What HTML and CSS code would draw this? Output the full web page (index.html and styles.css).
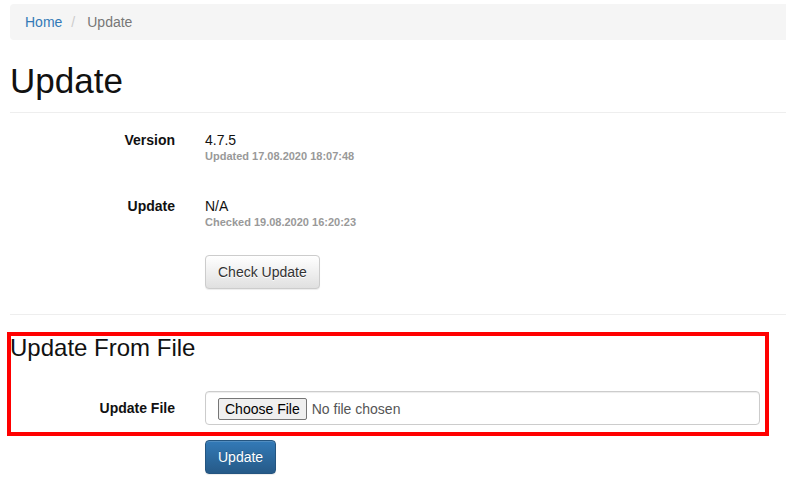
FILE: index.html
```html
<!DOCTYPE html>
<html lang="en">
<head>
<meta charset="utf-8">
<title>Update</title>
<link rel="stylesheet" href="styles.css">
</head>
<body>
<div class="page">
  <ol class="breadcrumb">
    <li><a href="#">Home</a></li>
    <li class="active">Update</li>
  </ol>

  <h1 class="page-title">Update</h1>

  <div class="form-row first">
    <div class="label">Version</div>
    <div class="value">
      <div class="value-main">4.7.5</div>
      <div class="value-note">Updated 17.08.2020 18:07:48</div>
    </div>
  </div>

  <div class="form-row">
    <div class="label">Update</div>
    <div class="value">
      <div class="value-main">N/A</div>
      <div class="value-note">Checked 19.08.2020 16:20:23</div>
    </div>
  </div>

  <div class="form-row actions">
    <div></div>
    <div><button class="btn btn-default" type="button">Check Update</button></div>
  </div>

  <div class="divider"></div>

  <h3 class="section-title">Update From File</h3>

  <div class="form-row file-row">
    <label class="label" for="file">Update File</label>
    <div class="value-input"><input id="file" class="form-control" type="file"></div>
  </div>

  <div class="form-row submit-row">
    <div></div>
    <div><button class="btn btn-primary" type="button">Update</button></div>
  </div>

  <div class="highlight"></div>
</div>
</body>
</html>
```

FILE: styles.css
```css
html, body {
  margin: 0;
  padding: 0;
  background: #fff;
}

body {
  font-family: "Liberation Sans", Arial, Helvetica, sans-serif;
  font-size: 14px;
  line-height: 20px;
  color: #333;
  overflow: hidden;
}

.page {
  position: relative;
  padding: 4px 0 0 10px;
  min-height: 482px;
}

.breadcrumb {
  list-style: none;
  margin: 0;
  padding: 8px 15px;
  background: #f5f5f5;
  border-radius: 4px 0 0 4px;
  display: flex;
  line-height: 20px;
}

.breadcrumb li + li::before {
  content: "/";
  padding: 0 12px 0 9px;
  color: #ccc;
}

.breadcrumb a {
  color: #337ab7;
  text-decoration: none;
}

.breadcrumb .active {
  color: #777;
}

.page-title {
  margin: 22px 0 0;
  font-size: 35px;
  line-height: 38px;
  font-weight: normal;
  color: #111;
  padding-bottom: 12px;
  border-bottom: 1px solid #eee;
}

.form-row {
  display: grid;
  grid-template-columns: 165px 555px;
  column-gap: 30px;
  margin-top: 27px;
}

.form-row.first {
  margin-top: 10px;
}

.label {
  display: block;
  text-align: right;
  font-weight: bold;
  padding-top: 7px;
  color: #111;
}

.value {
  padding-top: 7px;
}

.value-main {
  line-height: 20px;
  color: #111;
}

.value-note {
  font-size: 11px;
  line-height: 12px;
  font-weight: bold;
  color: #999;
}

.btn {
  display: inline-block;
  box-sizing: border-box;
  height: 34px;
  padding: 6px 12px;
  font-family: inherit;
  font-size: 14px;
  line-height: 20px;
  border: 1px solid transparent;
  border-radius: 4px;
  cursor: pointer;
  margin: 0;
}

.btn-default {
  color: #333;
  background-image: linear-gradient(to bottom, #fff 0, #e0e0e0 100%);
  border-color: #ccc;
  text-shadow: 0 1px 0 #fff;
  box-shadow: inset 0 1px 0 rgba(255,255,255,.15), 0 1px 1px rgba(0,0,0,.075);
}

.btn-primary {
  color: #fff;
  background-image: linear-gradient(to bottom, #337ab7 0, #265a88 100%);
  border-color: #245580;
  text-shadow: 0 -1px 0 rgba(0,0,0,.2);
  box-shadow: inset 0 1px 0 rgba(255,255,255,.15), 0 1px 1px rgba(0,0,0,.075);
}

.divider {
  margin-top: 25px;
  border-top: 1px solid #eee;
}

.section-title {
  margin: 20px 0 0;
  font-size: 24px;
  line-height: 25px;
  font-weight: normal;
  color: #111;
}

.file-row {
  margin-top: 31px;
}

.form-control {
  display: block;
  box-sizing: border-box;
  width: 100%;
  height: 34px;
  padding: 6px 12px;
  font-family: inherit;
  font-size: 14px;
  line-height: 20px;
  color: #555;
  background: #fff;
  border: 1px solid #ccc;
  border-radius: 4px;
  box-shadow: inset 0 1px 1px rgba(0,0,0,.075);
  margin: 0;
}

.form-control::file-selector-button {
  font-family: inherit;
  font-size: 14px;
  line-height: 18px;
  padding: 1px 6px;
  margin: 0 5px 0 0;
  color: #000;
  background: #efefef;
  border: 1px solid #767676;
  border-radius: 2px;
}

.submit-row {
  margin-top: 15px;
}

.highlight {
  position: absolute;
  left: 7px;
  top: 332px;
  width: 762px;
  height: 104px;
  box-sizing: border-box;
  border: 4px solid #f00;
  pointer-events: none;
}
```
